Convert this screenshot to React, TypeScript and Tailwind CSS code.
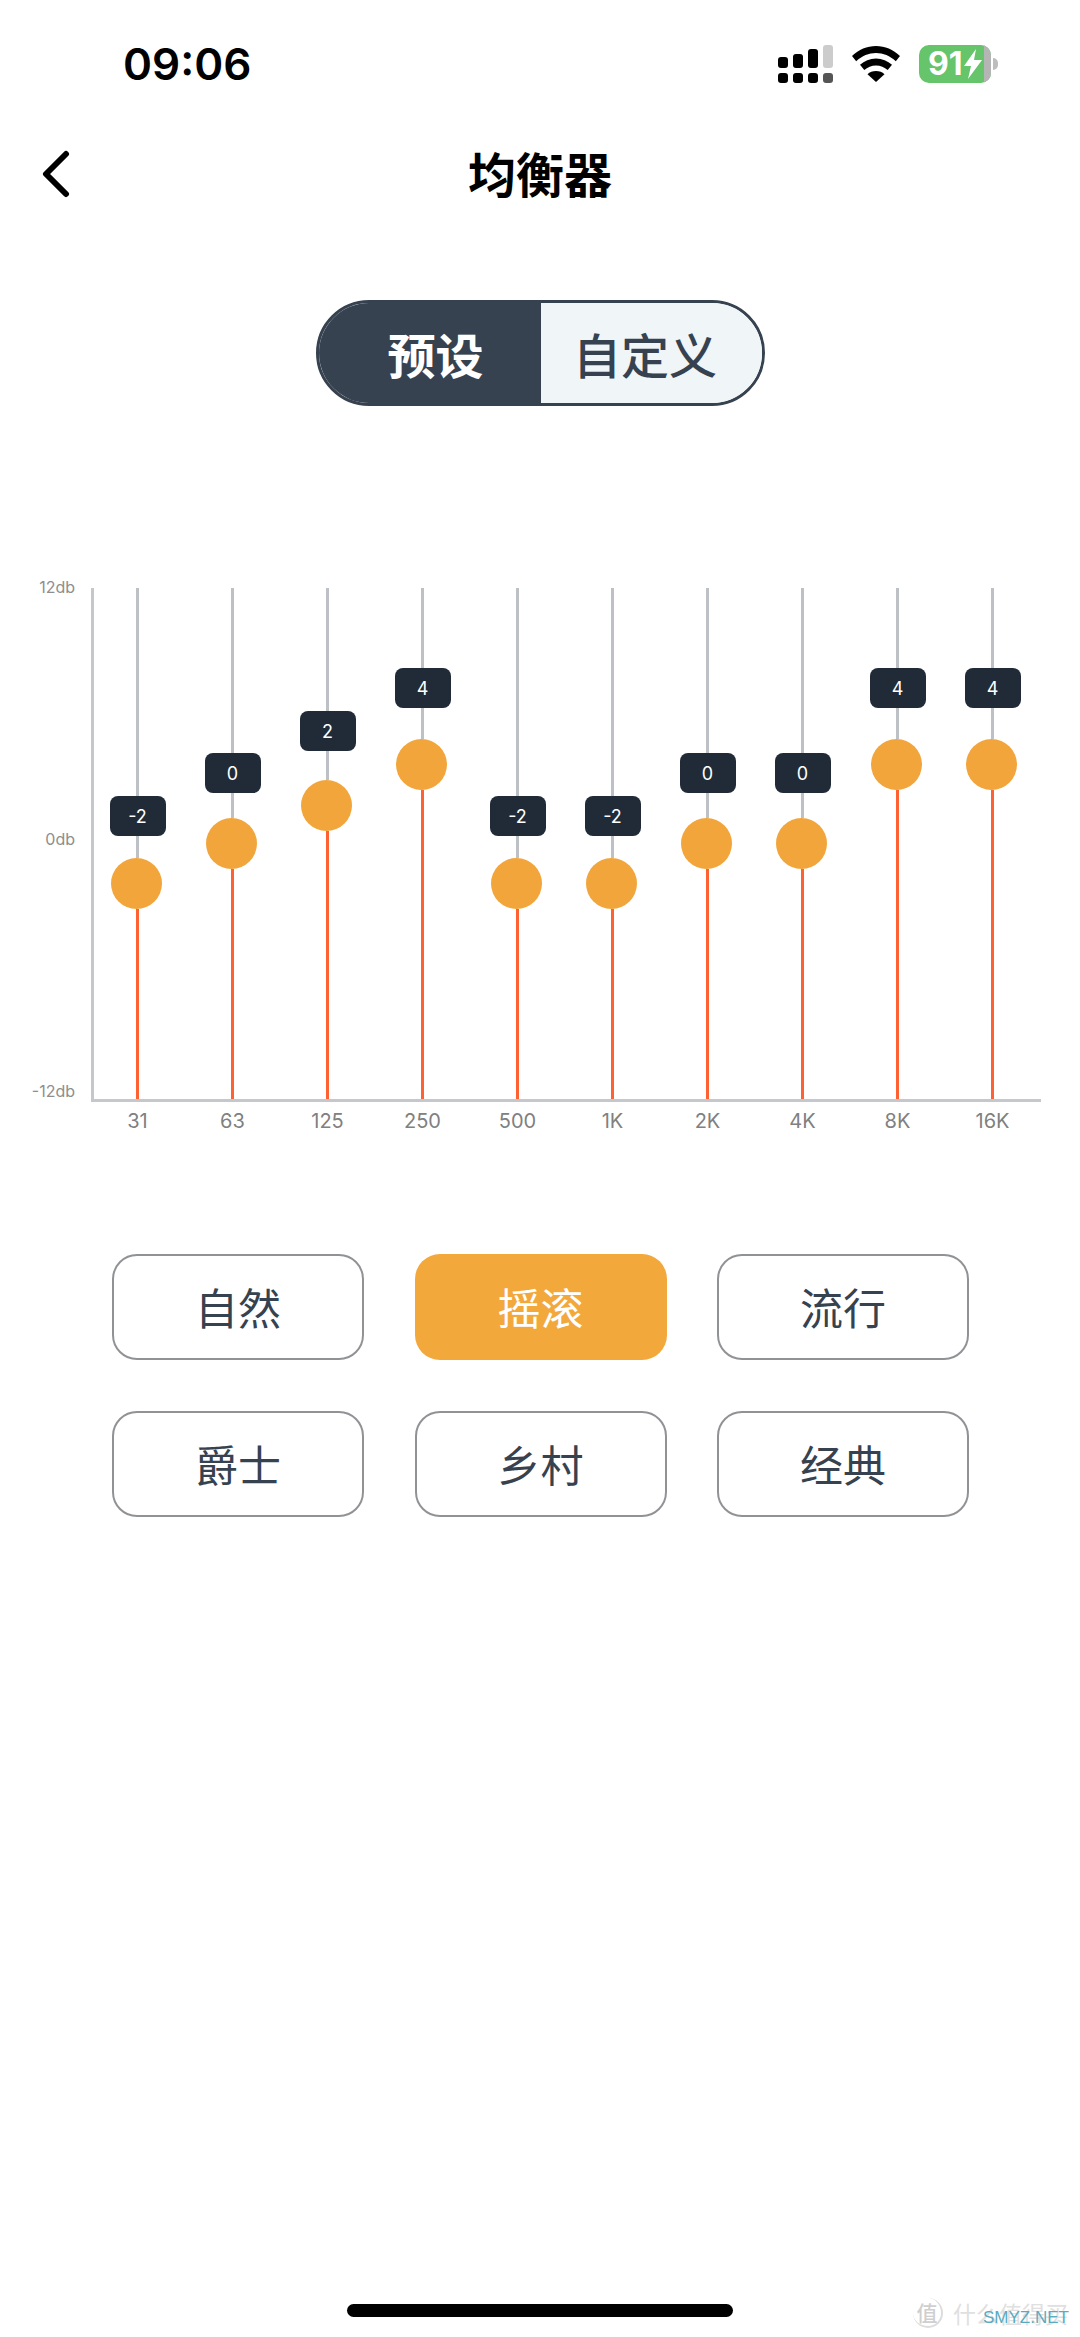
import React from "react";

const CJK = "font-['Noto_Sans_CJK_SC',sans-serif]";

const bands = [
  { f: "31", v: "-2", badge: 796, thumb: 858 },
  { f: "63", v: "0", badge: 753, thumb: 818 },
  { f: "125", v: "2", badge: 711, thumb: 780 },
  { f: "250", v: "4", badge: 668, thumb: 739 },
  { f: "500", v: "-2", badge: 796, thumb: 858 },
  { f: "1K", v: "-2", badge: 796, thumb: 858 },
  { f: "2K", v: "0", badge: 753, thumb: 818 },
  { f: "4K", v: "0", badge: 753, thumb: 818 },
  { f: "8K", v: "4", badge: 668, thumb: 739 },
  { f: "16K", v: "4", badge: 668, thumb: 739 },
];

const TOP = 588;
const BOTTOM = 1099;
const THUMB = 51;
const BADGE = 40;

function Band({ b }: { b: (typeof bands)[number] }) {
  return (
    <div className="flex w-[95px] flex-col items-center h-[511px]">
      <div className="w-[3px] bg-[#bdc1c6]" style={{ height: b.badge - TOP }} />
      <div className="flex h-[40px] w-[56px] shrink-0 items-center justify-center rounded-[8px] bg-[#212b38] text-[18px] text-white">
        {b.v}
      </div>
      <div className="w-[3px] bg-[#bdc1c6]" style={{ height: b.thumb - b.badge - BADGE }} />
      <div className="h-[51px] w-[51px] shrink-0 -translate-x-[1px] rounded-full bg-[#f2a53b]" />
      <div className="w-[3px] bg-[#ff6232]" style={{ height: BOTTOM - b.thumb - THUMB }} />
    </div>
  );
}

function Preset({ label, active }: { label: string; active?: boolean }) {
  return (
    <div
      className={
        active
          ? "flex h-[106px] w-[252px] items-center justify-center rounded-[25px] bg-[#f3a83c] pb-[2px] text-[43px] text-white"
          : "flex h-[106px] w-[252px] items-center justify-center rounded-[25px] border-2 border-[#909295] bg-white pb-[2px] text-[43px] text-[#36424f]"
      }
    >
      {label}
    </div>
  );
}

function StatusIcons() {
  return (
    <div className="flex items-center">
      <svg width="56" height="38" viewBox="0 0 56 38" className="mr-[18px]">
        <rect x="0" y="12" width="10" height="11" rx="3" fill="#000" />
        <rect x="15" y="9" width="10" height="14" rx="3" fill="#000" />
        <rect x="30" y="4" width="10" height="19" rx="3" fill="#000" />
        <rect x="45" y="0" width="10" height="23" rx="3" fill="#cccccc" />
        <rect x="0" y="28" width="10" height="10" rx="3" fill="#000" />
        <rect x="15" y="28" width="10" height="10" rx="3" fill="#000" />
        <rect x="30" y="28" width="10" height="10" rx="3" fill="#000" />
        <rect x="45" y="28" width="10" height="10" rx="3" fill="#555555" />
      </svg>
      <svg width="48" height="36" viewBox="0 0 48 36" className="mr-[19px]">
        <path d="M24 0C15 0 6.800 3.500 0 10l4.200 5.200C10 9.800 16.800 7 24 7s14 2.800 19.800 8.200L48 10C41.200 3.500 33 0 24 0Z" fill="#000" />
        <path d="M24 12.500c-6.200 0-11.600 2.300-16 6.300l4.300 5.300c3.200-2.900 7.200-4.600 11.700-4.600s8.500 1.700 11.700 4.600l4.300-5.300c-4.400-4-9.800-6.300-16-6.300Z" fill="#000" />
        <path d="M24 25c-3.400 0-6.300 1.200-8.500 3.200L24 36l8.500-7.800C30.300 26.200 27.400 25 24 25Z" fill="#000" />
      </svg>
      <div className="relative flex h-[38px] w-[72px] items-center overflow-hidden rounded-[10px] bg-[#66c46b] pl-[9px] font-['Inter',sans-serif] text-[32px] leading-none font-bold text-white">
        91
        <svg width="18" height="30" viewBox="0 0 18 30" className="ml-[1px]">
          <path d="M12 0 0 17h7l-3 13L18 11h-8l2-11Z" fill="#fff" />
        </svg>
        <div className="absolute top-0 right-0 h-full w-[7px] bg-[#b5b5b5]" />
      </div>
      <div className="ml-[2px] h-[12px] w-[5px] rounded-r-full bg-[#bdbdbd]" />
    </div>
  );
}

export default function App() {
  return (
    <div className="relative h-[2337px] w-[1080px] overflow-hidden bg-white font-['Inter',sans-serif]">
      {/* status bar */}
      <div className="mt-[42px] flex h-[44px] items-center justify-between pr-[82px] pl-[123px]">
        <span className="text-[44px] leading-none font-semibold text-black">09:06</span>
        <StatusIcons />
      </div>

      {/* header */}
      <div className="relative mt-[42px] flex h-[88px] items-center justify-center">
        <svg width="30" height="48" viewBox="0 0 30 48" className="absolute top-[22px] left-[40px]">
          <path d="M26 4 6 24l20 20" fill="none" stroke="#000" strokeWidth="6" strokeLinecap="round" strokeLinejoin="round" />
        </svg>
        <h1 className={`${CJK} text-[48px] leading-none font-bold text-black`}>均衡器</h1>
      </div>

      {/* toggle */}
      <div className="mt-[84px] flex justify-center">
        <div className={`${CJK} flex h-[106px] w-[449px] overflow-hidden rounded-full border-[3px] border-[#36424f] text-[48px] leading-none`}>
          <div className="flex w-[222px] items-center justify-center bg-[#36424f] pl-[12px] font-bold text-white">预设</div>
          <div className="flex flex-1 items-center justify-center bg-[#f0f5f8] pr-[12px] font-medium text-[#36424f]">自定义</div>
        </div>
      </div>

      {/* chart */}
      <div className="mt-[182px] flex">
        <div className="-mt-[11px] flex h-[524px] w-[91px] flex-col justify-between pr-[16px] text-right text-[16px] leading-[20px] text-[#8e8e8e]">
          <span>12db</span>
          <span>0db</span>
          <span>-12db</span>
        </div>
        <div className="h-[514px] w-[950px] border-b-[3px] border-l-[3px] border-[#c4c7cb]">
          <div className="-ml-[4px] flex">
            {bands.map((b, i) => (
              <Band key={i} b={b} />
            ))}
          </div>
        </div>
      </div>
      <div className="mt-[7px] flex pl-[90px] text-[20px] leading-[24px] text-[#808080]">
        {bands.map((b, i) => (
          <div key={i} className="w-[95px] text-center">
            {b.f}
          </div>
        ))}
      </div>

      {/* presets */}
      <div className={`${CJK} mt-[121px] ml-[112px] grid grid-cols-[252px_252px_252px] gap-x-[50.5px] gap-y-[51px]`}>
        <Preset label="自然" />
        <Preset label="摇滚" active />
        <Preset label="流行" />
        <Preset label="爵士" />
        <Preset label="乡村" />
        <Preset label="经典" />
      </div>

      {/* home indicator */}
      <div className="absolute top-[2304px] left-[347px] h-[13px] w-[386px] rounded-full bg-black" />

      {/* watermark */}
      <div className={`${CJK} absolute top-[2298px] left-[913px] flex items-center text-[#e0e0e0]`}>
        <span className="flex h-[30px] w-[30px] items-center justify-center rounded-full border-r-2 border-b-2 border-[#dcdcdc] text-[21px] leading-none font-medium text-[#cfcfcf]">值</span>
        <span className="ml-[10px] text-[23px] leading-none whitespace-nowrap">什么值得买</span>
      </div>
      <div className="absolute top-[2308px] left-[983px] font-['Liberation_Sans',sans-serif] text-[17px] leading-[20px] text-[#5aabc0]">SMYZ.NET</div>
    </div>
  );
}
